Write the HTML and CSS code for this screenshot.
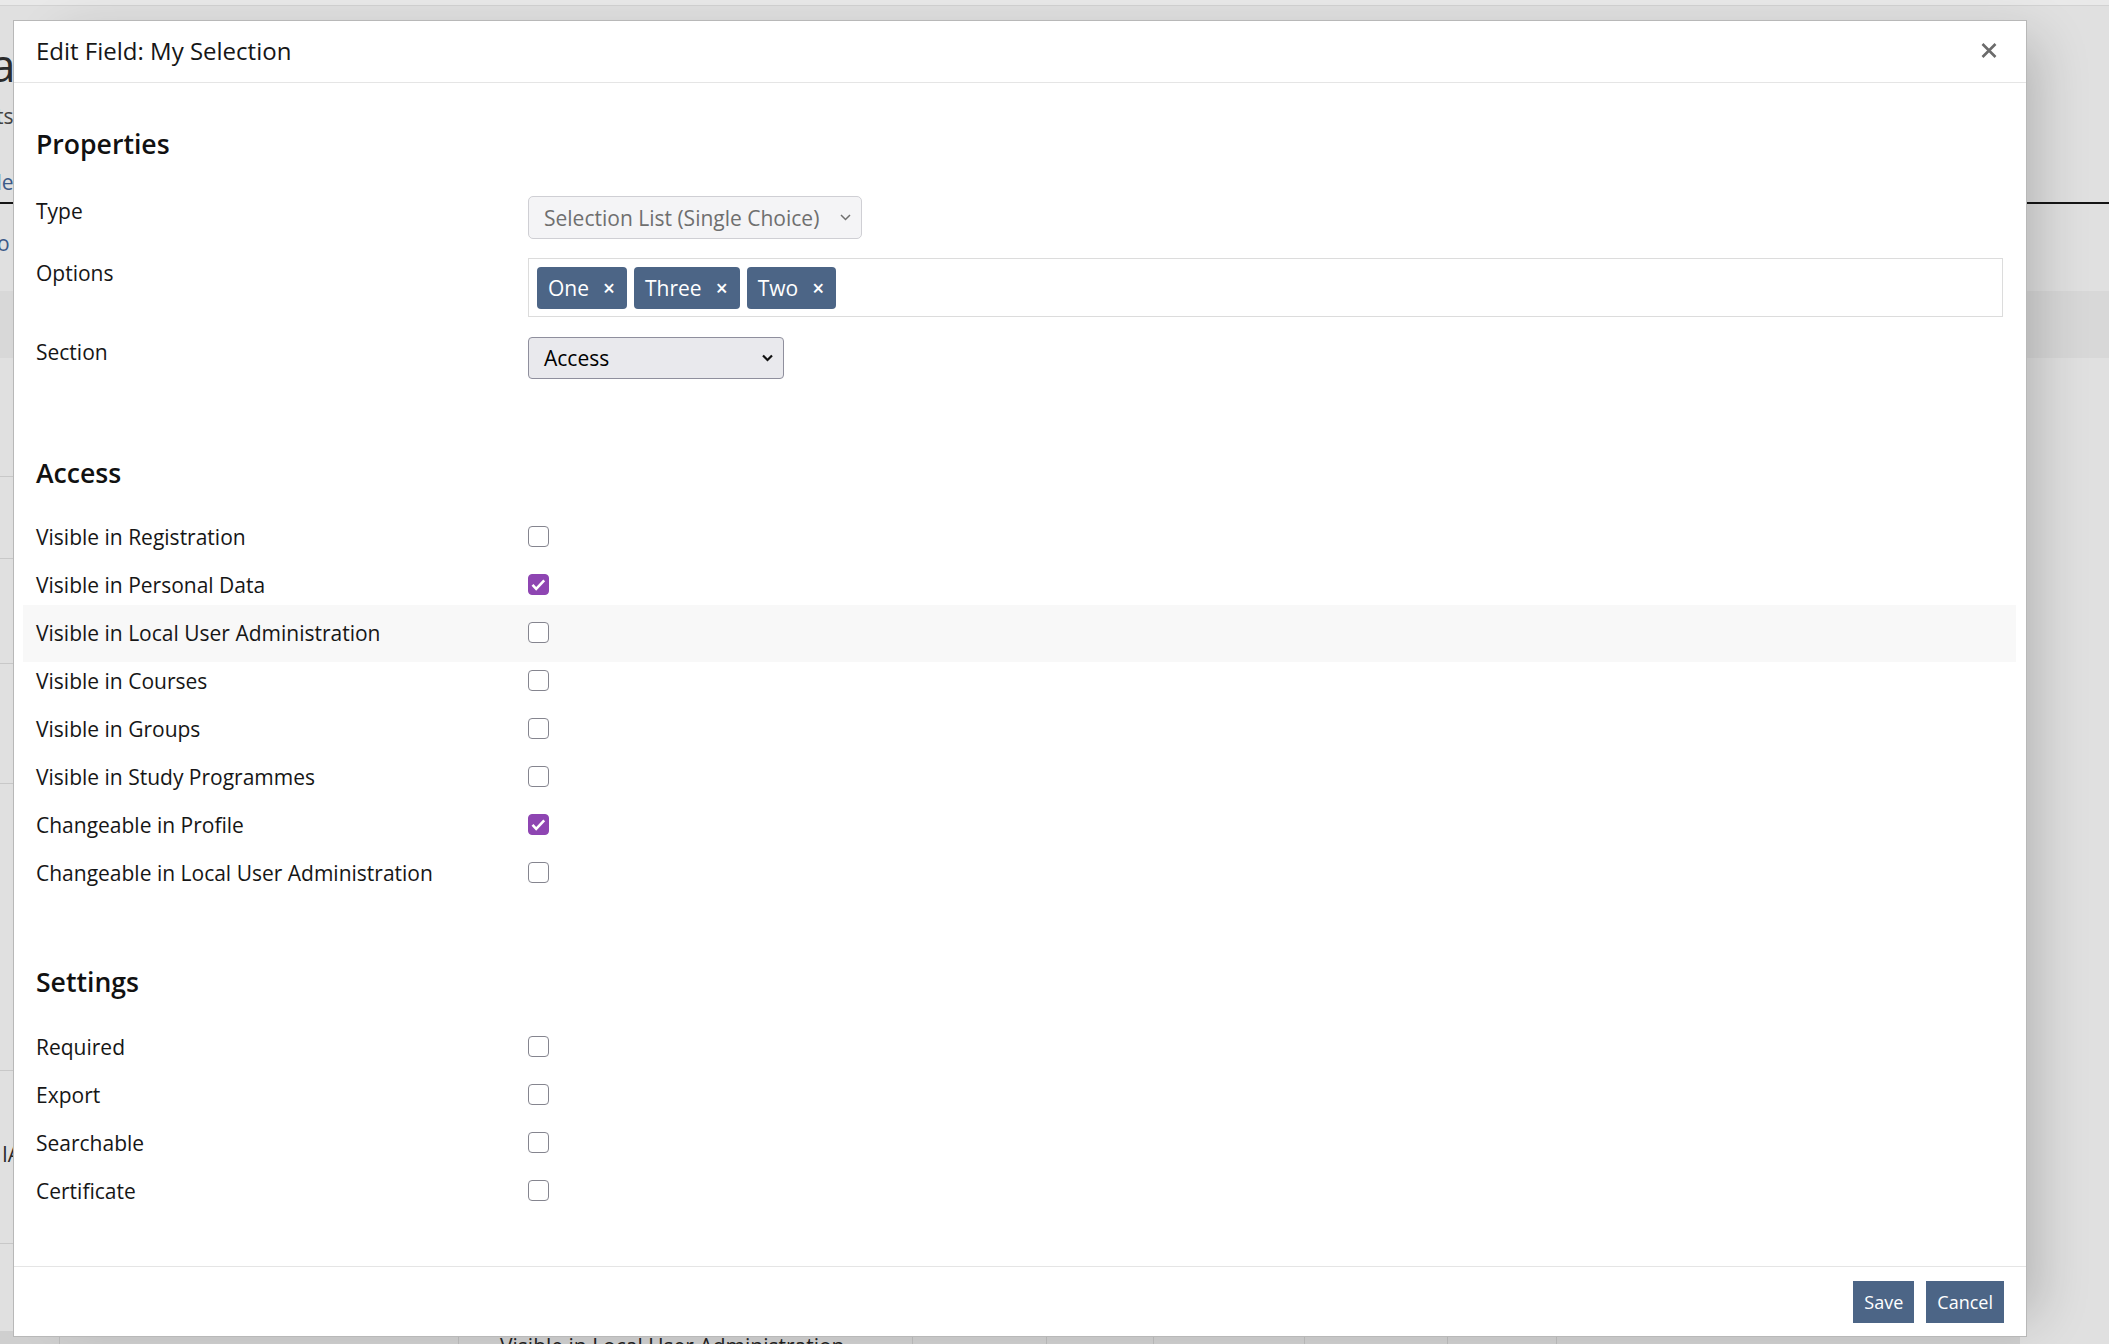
FILE: index.html
```html
<!DOCTYPE html>
<html lang="en">
<head>
    <meta charset="UTF-8">
    <title>Edit Field: My Selection</title>
    <link rel="stylesheet" href="styles.css">
</head>
<body>
    <!-- page behind the modal -->
    <div class="page">
        <div class="topbar"></div>
        <div class="page-title">a</div>
        <div class="page-sub">ts</div>
        <div class="tabs"><span class="tab">de</span></div>
        <div class="page-link">o</div>
        <div class="band"></div>
        <div class="list">
            <div class="list-row r1"></div>
            <div class="list-row r2"></div>
            <div class="list-row r3"></div>
            <div class="list-row r4"></div>
            <div class="list-row r5"></div>
            <div class="list-row r6"><span>IAS</span></div>
            <div class="list-gap"></div>
        </div>
        <div class="thead">
            <div class="th w1"></div>
            <div class="th w2"></div>
            <div class="th w3"><span>Visible in Local User Administration</span></div>
            <div class="th w4"></div>
            <div class="th w5"></div>
            <div class="th w6"></div>
            <div class="th w7"></div>
            <div class="th w8"></div>
            <div class="th w9"></div>
        </div>
    </div>

    <!-- modal -->
    <div class="modal">
        <div class="modal-header">
            <h4 class="modal-title">Edit Field: My Selection</h4>
            <button class="close" type="button">
                <svg width="16" height="15" viewBox="0 0 16 15"><path d="M1.5 1 L14.5 14 M14.5 1 L1.5 14" stroke="#6b6b6b" stroke-width="2.6" fill="none"/></svg>
            </button>
        </div>

        <div class="modal-body">
            <h3 class="section first">Properties</h3>

            <div class="form-row">
                <div class="label">Type</div>
                <div class="select disabled">
                    <span>Selection List (Single Choice)</span>
                    <svg width="11" height="7" viewBox="0 0 11 7"><path d="M1 1 L5.5 5.5 L10 1" stroke="#6f6f6f" stroke-width="1.5" fill="none"/></svg>
                </div>
            </div>

            <div class="form-row tall">
                <div class="label">Options</div>
                <div class="tags">
                    <span class="tag">One<span class="tag-x">×</span></span>
                    <span class="tag">Three<span class="tag-x">×</span></span>
                    <span class="tag">Two<span class="tag-x">×</span></span>
                </div>
            </div>

            <div class="form-row">
                <div class="label">Section</div>
                <div class="select section-select">
                    <span>Access</span>
                    <svg width="11" height="8" viewBox="0 0 11 8"><path d="M1 1.5 L5.5 6 L10 1.5" stroke="#111" stroke-width="2.2" fill="none"/></svg>
                </div>
            </div>

            <h3 class="section access">Access</h3>
            <div class="checks">
                <div class="check-row"><div class="label">Visible in Registration</div><span class="check"></span></div>
                <div class="check-row"><div class="label">Visible in Personal Data</div><span class="check on"><svg width="21" height="21" viewBox="0 0 21 21"><path d="M4.5 10.8 L8.2 14.8 L16.2 6.4" stroke="#fff" stroke-width="2.6" fill="none"/></svg></span></div>
                <div class="check-row hover"><div class="label">Visible in Local User Administration</div><span class="check"></span></div>
                <div class="check-row"><div class="label">Visible in Courses</div><span class="check"></span></div>
                <div class="check-row"><div class="label">Visible in Groups</div><span class="check"></span></div>
                <div class="check-row"><div class="label">Visible in Study Programmes</div><span class="check"></span></div>
                <div class="check-row"><div class="label">Changeable in Profile</div><span class="check on"><svg width="21" height="21" viewBox="0 0 21 21"><path d="M4.5 10.8 L8.2 14.8 L16.2 6.4" stroke="#fff" stroke-width="2.6" fill="none"/></svg></span></div>
                <div class="check-row"><div class="label">Changeable in Local User Administration</div><span class="check"></span></div>
            </div>

            <h3 class="section settings">Settings</h3>
            <div class="checks settings-list">
                <div class="check-row"><div class="label">Required</div><span class="check"></span></div>
                <div class="check-row"><div class="label">Export</div><span class="check"></span></div>
                <div class="check-row"><div class="label">Searchable</div><span class="check"></span></div>
                <div class="check-row"><div class="label">Certificate</div><span class="check"></span></div>
            </div>
        </div>

        <div class="modal-footer">
            <button class="btn" type="button">Save</button>
            <button class="btn" type="button">Cancel</button>
        </div>
    </div>
</body>
</html>
```

FILE: styles.css
```css
html, body {
    margin: 0;
    padding: 0;
    height: 1344px;
    overflow: hidden;
}

body {
    font-family: "Open Sans", "DejaVu Sans", sans-serif;
    background: #e0e0e0;
    color: #161616;
}

/* Page behind the backdrop */
.topbar {
    height: 5px;
    background: #e9e9e9;
    border-bottom: 1px solid #d2d2d2;
}

.page-title {
    margin-top: 35px;
    height: 46px;
    font-size: 46px;
    line-height: 46px;
    text-indent: -10px;
    color: #2b2b2b;
}

.page-sub {
    margin-top: 19px;
    height: 21px;
    font-size: 21px;
    line-height: 21px;
    text-indent: -4px;
    color: #444;
}

.tabs {
    margin-top: 45px;
    height: 21px;
    padding-bottom: 9px;
    border-bottom: 2px solid #151515;
    font-size: 21px;
    line-height: 21px;
    text-indent: -11px;
    color: #3c5a88;
}

.page-link {
    margin-top: 29px;
    height: 21px;
    font-size: 21px;
    line-height: 21px;
    text-indent: -3px;
    color: #3c5a88;
}

.band {
    margin-top: 37px;
    height: 67px;
    background: #d8d8d8;
}

.list { width: 1600px; }
.list-row { border-bottom: 1px solid #c8c8c8; }
.r1 { height: 118px; }
.r2 { height: 81px; }
.r3 { height: 104px; }
.r4 { height: 119px; }
.r5 { height: 286px; }
.r6 {
    height: 104px;
    padding-top: 68px;
    padding-left: 2px;
    font-size: 21px;
    line-height: 30px;
    color: #2b2b2b;
}
.list-gap { height: 87px; }

.thead {
    display: flex;
    width: 2020px;
    height: 48px;
    background: #cfcfcf;
}
.th {
    border-left: 1px solid #bcbcbc;
    font-size: 21px;
    line-height: 30px;
    color: #222;
}
.th:first-child { border-left: none; }
.w1 { width: 59px; }
.w2 { width: 398px; }
.w3 { width: 454px; padding-left: 41px; box-sizing: border-box; white-space: nowrap; }
.w4 { width: 133px; }
.w5 { width: 106px; }
.w6 { width: 150px; }
.w7 { width: 142px; }
.w8 { width: 108px; }
.w9 { flex: 1; }

/* Modal */
.modal {
    position: absolute;
    top: 20px;
    left: 13px;
    width: 2014px;
    height: 1317px;
    box-sizing: border-box;
    background: #fff;
    border: 1px solid #b8b8b8;
    box-shadow: 30px 0 50px -20px rgba(0, 0, 0, 0.2);
    display: flex;
    flex-direction: column;
}

.modal-header {
    display: flex;
    justify-content: space-between;
    align-items: center;
    padding: 13px 23px 14px 22px;
    border-bottom: 1px solid #e5e5e5;
}

.modal-title {
    margin: 0;
    font-size: 24px;
    line-height: 34px;
    font-weight: 400;
    color: #161616;
}

.close {
    display: flex;
    padding: 0;
    margin: -2px 6px 0 0;
    border: none;
    background: none;
    cursor: pointer;
}

.modal-body {
    flex: 1;
    padding: 0 23px 0 22px;
}

.section {
    margin: 0;
    font-size: 26.6px;
    line-height: 30px;
    font-weight: 600;
    color: #111;
}
.section.first { margin-top: 46px; margin-bottom: 37px; }
.section.access { margin-top: 79px; margin-bottom: 26px; }
.section.settings { margin-top: 69px; margin-bottom: 27px; }

.label {
    font-size: 21px;
    line-height: 30px;
    color: #161616;
}

.form-row {
    display: grid;
    grid-template-columns: 492px 1fr;
    align-items: start;
    margin-bottom: 19px;
}
.form-row.tall { margin-bottom: 20px; }

.select {
    display: flex;
    align-items: center;
    justify-content: space-between;
    box-sizing: border-box;
    font-size: 21px;
    border-radius: 5px;
    padding: 0 10px 0 15px;
}
.select.disabled {
    width: 334px;
    height: 43px;
    background: #f4f4f6;
    border: 1px solid #cfcfd4;
    color: #6f6f6f;
}
.section-select {
    width: 256px;
    height: 42px;
    background: #e9e9ed;
    border: 1px solid #8f8f9d;
    border-radius: 4px;
    color: #000;
}

.tags {
    display: flex;
    gap: 7px;
    height: 59px;
    box-sizing: border-box;
    padding: 8px 8px 7px;
    border: 1px solid #dcdcdc;
}

.tag {
    display: inline-flex;
    align-items: center;
    height: 42px;
    padding: 0 12px 0 11px;
    background: #4c6586;
    color: #fff;
    border-radius: 4px;
    font-size: 21px;
}
.tag-x {
    margin-left: 14px;
    font-size: 21px;
    font-weight: 600;
}

.check-row {
    display: grid;
    grid-template-columns: 492px 1fr;
    align-items: start;
    height: 48px;
}
.check-row .label { padding-top: 8px; }
.check-row.hover {
    background: #f8f8f8;
    margin: -5px -13px -4px;
    padding: 5px 13px 4px;
}

.check {
    display: block;
    width: 21px;
    height: 21px;
    margin-top: 12px;
    box-sizing: border-box;
    border: 1.5px solid #85858f;
    border-radius: 4px;
    background: #fff;
}
.check svg {
    display: block;
    margin: -1.5px;
}
.check.on {
    background: #8e45b2;
    border-color: #8e45b2;
}

.modal-footer {
    display: flex;
    justify-content: flex-end;
    gap: 12px;
    padding: 14px 22px 13px;
    border-top: 1px solid #e5e5e5;
}

.btn {
    height: 42px;
    padding: 0 11px;
    border: none;
    border-radius: 0;
    background: #4c6586;
    color: #fff;
    font-family: inherit;
    font-size: 18px;
    cursor: pointer;
}
```
